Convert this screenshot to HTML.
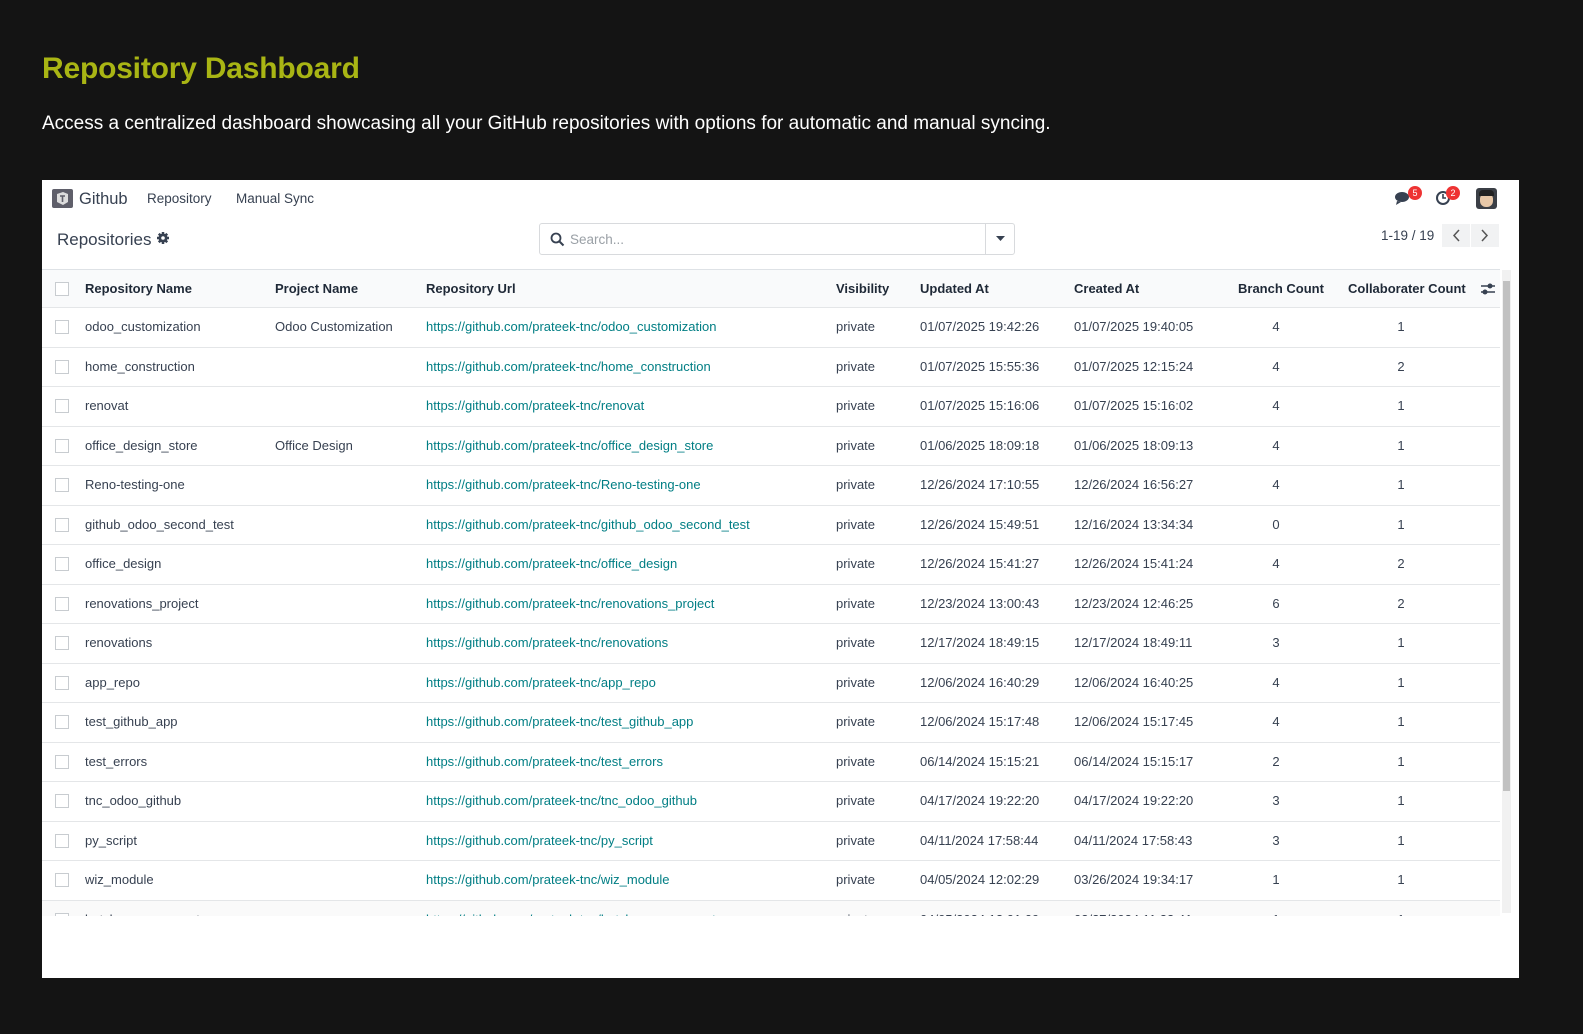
<!DOCTYPE html>
<html><head><meta charset="utf-8">
<style>
*{box-sizing:border-box;margin:0;padding:0}
body{width:1583px;height:1034px;background:#141414;font-family:"Liberation Sans",sans-serif;position:relative;overflow:hidden}
h1{position:absolute;left:42px;top:52px;font-size:30px;font-weight:bold;color:#a9b514;letter-spacing:-0.2px}
.sub{position:absolute;left:42px;top:113px;font-size:19px;color:#fff}
.app{position:absolute;left:42px;top:180px;width:1477px;height:798px;background:#fff;color:#374151;font-size:13px}
.nav{position:absolute;top:0;left:0;right:0;height:36px}
.logo{position:absolute;left:10px;top:9px;width:21px;height:19px;background:#5f5f6a;border-radius:2px}
.nav .t{position:absolute;top:10px;font-size:16.5px;color:#374151}
.nav .m{position:absolute;top:11px;font-size:13.5px}
.ctl{position:absolute;left:15px;top:50px;font-size:17px;color:#374151}
.search{position:absolute;left:497px;top:43px;width:476px;height:32px;border:1px solid #d8dadd;border-radius:3px}
.search .dd{position:absolute;right:0;top:0;width:29px;height:30px;border-left:1px solid #d8dadd}
.search .ph{position:absolute;left:30px;top:8px;color:#9aa0a6;font-size:13.5px}
.pager{position:absolute;left:1339px;top:48px;font-size:13.5px}
.pbtn{position:absolute;top:44px;width:28px;height:23px;background:#f1f2f3}
.tbl{position:absolute;left:0;top:89px;width:1458px;height:647px;overflow:hidden;border-top:1px solid #dee2e6}
.row{position:absolute;left:0;width:1458px;height:39.5px;border-bottom:1px solid #e4e6e8}
.row span{position:absolute;top:11px;white-space:nowrap}
.hdr{background:#f9fafb;height:38px;top:0}
.hdr span{font-weight:bold;color:#1f2937;top:11px;font-size:13px}
.cb{position:absolute;left:13px;top:12px;width:14px;height:14px;border:1px solid #c8ccd0;background:#fff}
.u{color:#017e84}
.c{text-align:center;width:20px}
.sb{position:absolute;left:1460px;top:90px;width:9px;height:643px;background:#f1f1f1}
.sb div{position:absolute;left:1px;top:11px;width:7px;height:510px;background:#c1c1c1}
</style></head><body>
<h1>Repository Dashboard</h1>
<div class="sub">Access a centralized dashboard showcasing all your GitHub repositories with options for automatic and manual syncing.</div>
<div class="app">
 <div class="nav">
  <div class="logo"><svg width="21" height="19" viewBox="0 0 21 19"><path d="M5 5l6-2 5 2v8l-5 3-6-3z" fill="#ddd"/><path d="M8 7h5M10.5 7v6" stroke="#5f5f6a" stroke-width="1.6"/></svg></div>
  <span class="t" style="left:37px">Github</span>
  <span class="m" style="left:105px">Repository</span>
  <span class="m" style="left:194px">Manual Sync</span>
  <svg style="position:absolute;left:1352px;top:10px" width="20" height="16" viewBox="0 0 20 16"><ellipse cx="8" cy="7" rx="7" ry="5" fill="#374151"/><path d="M3 11l-1 4 5-3z" fill="#374151"/></svg>
  <div style="position:absolute;left:1366px;top:6px;width:14px;height:14px;border-radius:7px;background:#e33;color:#fff;font-size:9px;text-align:center;line-height:14px">5</div>
  <svg style="position:absolute;left:1393px;top:10px" width="16" height="16" viewBox="0 0 16 16"><circle cx="8" cy="8" r="6" fill="none" stroke="#374151" stroke-width="2"/><path d="M8 4v4h3" stroke="#374151" stroke-width="1.6" fill="none"/></svg>
  <div style="position:absolute;left:1404px;top:6px;width:14px;height:14px;border-radius:7px;background:#e33;color:#fff;font-size:9px;text-align:center;line-height:14px">2</div>
  <div style="position:absolute;left:1434px;top:8px;width:21px;height:21px;border-radius:3px;background:#3b3f46;overflow:hidden"><div style="position:absolute;left:4px;top:5px;width:13px;height:14px;border-radius:6px;background:#e8c8a8"></div><div style="position:absolute;left:3px;top:2px;width:15px;height:6px;background:#222;border-radius:4px 4px 0 0"></div></div>
 </div>
 <div class="ctl">Repositories <svg width="14" height="14" viewBox="0 0 14 14" style="vertical-align:0"><circle cx="7" cy="7" r="4.5" fill="#374151"/><g stroke="#374151" stroke-width="2.5"><path d="M7 1v12M1 7h12M2.8 2.8l8.4 8.4M11.2 2.8l-8.4 8.4"/></g><circle cx="7" cy="7" r="1.8" fill="#fff"/></svg></div>
 <div class="search"><svg style="position:absolute;left:10px;top:8px" width="15" height="15" viewBox="0 0 15 15"><circle cx="6" cy="6" r="4.5" fill="none" stroke="#374151" stroke-width="1.8"/><path d="M9.5 9.5l4 4" stroke="#374151" stroke-width="2"/></svg><span class="ph">Search...</span><div class="dd"><svg style="position:absolute;left:10px;top:12px" width="9" height="6"><path d="M0 0h9L4.5 5z" fill="#374151"/></svg></div></div>
 <span class="pager">1-19 / 19</span>
 <div class="pbtn" style="left:1400px"><svg width="28" height="23"><path d="M17 6l-5 5.5 5 5.5" stroke="#555" fill="none" stroke-width="1.5"/></svg></div>
 <div class="pbtn" style="left:1429px"><svg width="28" height="23"><path d="M11 6l5 5.5-5 5.5" stroke="#555" fill="none" stroke-width="1.5"/></svg></div>
 <div class="tbl" id="t"></div>
 <div class="sb"><div></div></div>
</div>
<script>
var d=[["odoo_customization","Odoo Customization","odoo_customization","01/07/2025 19:42:26","01/07/2025 19:40:05",4,1],
["home_construction","","home_construction","01/07/2025 15:55:36","01/07/2025 12:15:24",4,2],
["renovat","","renovat","01/07/2025 15:16:06","01/07/2025 15:16:02",4,1],
["office_design_store","Office Design","office_design_store","01/06/2025 18:09:18","01/06/2025 18:09:13",4,1],
["Reno-testing-one","","Reno-testing-one","12/26/2024 17:10:55","12/26/2024 16:56:27",4,1],
["github_odoo_second_test","","github_odoo_second_test","12/26/2024 15:49:51","12/16/2024 13:34:34",0,1],
["office_design","","office_design","12/26/2024 15:41:27","12/26/2024 15:41:24",4,2],
["renovations_project","","renovations_project","12/23/2024 13:00:43","12/23/2024 12:46:25",6,2],
["renovations","","renovations","12/17/2024 18:49:15","12/17/2024 18:49:11",3,1],
["app_repo","","app_repo","12/06/2024 16:40:29","12/06/2024 16:40:25",4,1],
["test_github_app","","test_github_app","12/06/2024 15:17:48","12/06/2024 15:17:45",4,1],
["test_errors","","test_errors","06/14/2024 15:15:21","06/14/2024 15:15:17",2,1],
["tnc_odoo_github","","tnc_odoo_github","04/17/2024 19:22:20","04/17/2024 19:22:20",3,1],
["py_script","","py_script","04/11/2024 17:58:44","04/11/2024 17:58:43",3,1],
["wiz_module","","wiz_module","04/05/2024 12:02:29","03/26/2024 19:34:17",1,1],
["batch_management","","batch_management","04/05/2024 12:01:09","03/27/2024 11:23:41",1,1]];
var h='<div class="row hdr"><div class="cb"></div><span style="left:43px">Repository Name</span><span style="left:233px">Project Name</span><span style="left:384px">Repository Url</span><span style="left:794px">Visibility</span><span style="left:878px">Updated At</span><span style="left:1032px">Created At</span><span style="left:1196px">Branch Count</span><span style="left:1306px">Collaborater Count</span><svg style="position:absolute;left:1438px;top:12px" width="16" height="14"><path d="M1 4h14M1 10h14" stroke="#374151" stroke-width="1.6"/><circle cx="10" cy="4" r="2.5" fill="#374151"/><circle cx="5" cy="10" r="2.5" fill="#374151"/></svg></div>';
d.forEach(function(r,i){var t=38+i*39.5;h+='<div class="row" style="top:'+t+'px'+(i==15?';background:#fafafa':'')+'"><div class="cb"></div><span style="left:43px">'+r[0]+'</span><span style="left:233px">'+r[1]+'</span><span class="u" style="left:384px">https://github.com/prateek-tnc/'+r[2]+'</span><span style="left:794px">private</span><span style="left:878px">'+r[3]+'</span><span style="left:1032px">'+r[4]+'</span><span class="c" style="left:1224px">'+r[5]+'</span><span class="c" style="left:1349px">'+r[6]+'</span></div>';});
document.getElementById('t').innerHTML=h;
</script>
</body></html>
